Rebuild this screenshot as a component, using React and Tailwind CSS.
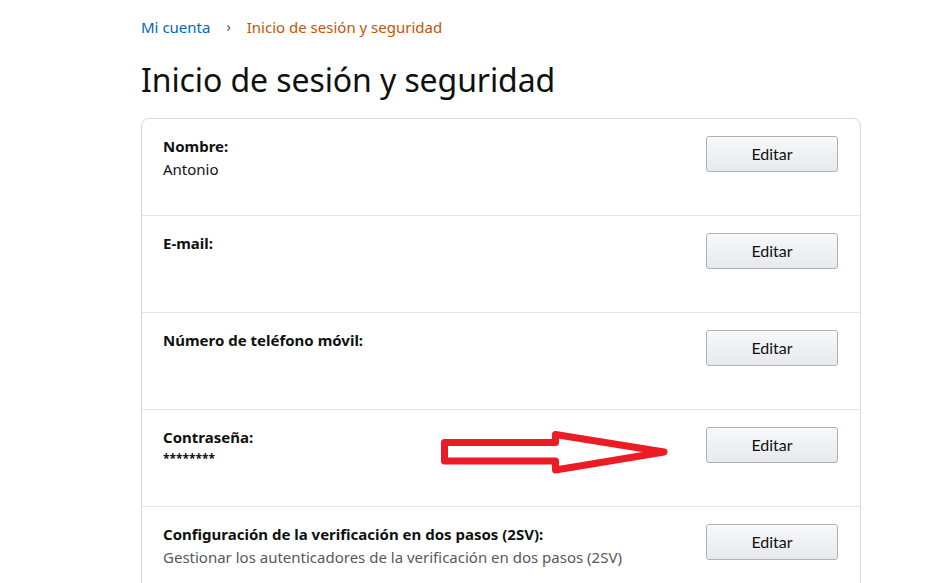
export default function App() {
  const rows = [
    { label: "Nombre:", value: "Antonio" },
    { label: "E-mail:" },
    { label: "Número de teléfono móvil:" },
    { label: "Contraseña:", value: "********", small: true },
    {
      label: "Configuración de la verificación en dos pasos (2SV):",
      value: "Gestionar los autenticadores de la verificación en dos pasos (2SV)",
      gray: true,
    },
  ];
  return (
    <div
      className="relative w-[946px] h-[583px] overflow-hidden bg-white text-[#0f1111]"
      style={{ fontFamily: '"Noto Sans", "Open Sans", Arial, sans-serif' }}
    >
      <div className="pl-[141px] pt-[16px]">
        <div className="flex items-center text-[15px] leading-[22px]">
          <span className="text-[#0066c0]">Mi cuenta</span>
          <span className="mx-[16px] text-[#555] text-[14px]">›</span>
          <span className="text-[#c45500]">Inicio de sesión y seguridad</span>
        </div>
        <h1 className="mt-[22px] text-[32px] leading-[40px] font-normal tracking-[-0.1px]">
          Inicio de sesión y seguridad
        </h1>
        <div className="mt-[18px] w-[720px] border border-[#d5d9d9] rounded-t-[8px]">
          {rows.map((r, i) => (
            <div
              key={i}
              className="flex justify-between h-[97px] border-b border-[#e3e6e6] pl-[21px] pr-[22px] pt-[16px]"
            >
              <div className="text-[15px] leading-[23px]">
                <div className="font-bold">{r.label}</div>
                {r.value && (
                  <div
                    className={
                      r.gray
                        ? "text-[#565959]"
                        : r.small
                        ? "text-[12px] font-bold leading-[20px]"
                        : ""
                    }
                  >
                    {r.value}
                  </div>
                )}
              </div>
              <button
                className="mt-[1px] w-[132px] h-[36px] rounded-[3px] border border-[#adb1b8] bg-gradient-to-b from-[#f7f8fa] to-[#e7e9ec] text-[16px] text-[#111] shadow-[0_1px_0_rgba(255,255,255,0.6)_inset]"
                style={{ fontFamily: 'Lato, "Noto Sans", sans-serif' }}
              >
                Editar
              </button>
            </div>
          ))}
        </div>
      </div>
      <svg
        className="absolute left-0 top-0 pointer-events-none"
        width="946"
        height="583"
        viewBox="0 0 946 583"
      >
        <polygon
          points="444.5,442.5 555.5,442.5 555.5,434.5 664,452 555.5,470 555.5,461 444.5,461"
          fill="none"
          stroke="#ed1c24"
          strokeWidth="7"
          strokeLinejoin="round"
        />
      </svg>
    </div>
  );
}
